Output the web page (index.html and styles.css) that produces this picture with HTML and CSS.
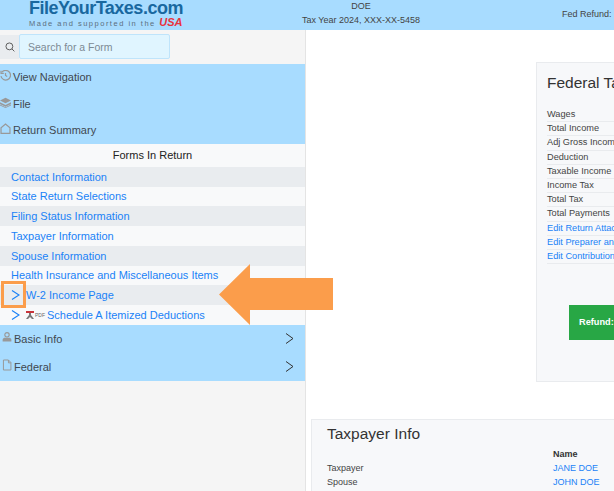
FILE: index.html
```html
<!DOCTYPE html>
<html lang="en">
<head>
    <meta charset="UTF-8">
    <title>FileYourTaxes.com</title>
    <link rel="stylesheet" href="styles.css">
</head>
<body>
    <div class="header">
        <div class="logo">
            <div class="logo-name">FileYourTaxes.com</div>
            <div class="logo-tag">Made and supported in the <span class="usa">USA</span></div>
        </div>
        <div class="client">
            <div>DOE</div>
            <div>Tax Year 2024, XXX-XX-5458</div>
        </div>
        <div class="fed-refund">Fed Refund:</div>
    </div>

    <div class="page">
        <div class="sidebar">
            <div class="search">
                <span class="search-icon">
                    <svg width="10" height="10" viewBox="0 0 16 16" fill="none" stroke="#555" stroke-width="1.5"><circle cx="7" cy="7" r="5.5"/><path d="M11 11l4 4"/></svg>
                </span>
                <input class="search-input" type="text" placeholder="Search for a Form">
            </div>

            <div class="nav">
                <div class="nav-item">
                    <svg class="nav-icon" width="11" height="11" viewBox="0 0 16 16" fill="none" stroke="#999" stroke-width="1.8"><path d="M3 3a7 7 0 1 1-1.6 6"/><path d="M1.5 1v4h4"/><path d="M8 4.5V8l2.5 1.5"/></svg>
                    View Navigation
                </div>
                <div class="nav-item">
                    <svg class="nav-icon" width="11" height="11" viewBox="0 0 16 16" fill="#999"><path d="M8 1l8 4-8 4-8-4z"/><path d="M0 7.5l8 4 8-4v2.5l-8 4-8-4z"/><path d="M0 11l8 4 8-4v1.5l-8 3.5-8-3.5z"/></svg>
                    File
                </div>
                <div class="nav-item">
                    <svg class="nav-icon" width="11" height="11" viewBox="0 0 16 16" fill="none" stroke="#999" stroke-width="1.8"><path d="M1.500 15V7L8 1.500 14.500 7v8z"/></svg>
                    Return Summary
                </div>
            </div>

            <div class="forms-title">Forms In Return</div>
            <div class="form-row"><a>Contact Information</a></div>
            <div class="form-row"><a>State Return Selections</a></div>
            <div class="form-row"><a>Filing Status Information</a></div>
            <div class="form-row"><a>Taxpayer Information</a></div>
            <div class="form-row"><a>Spouse Information</a></div>
            <div class="form-row"><a>Health Insurance and Miscellaneous Items</a></div>
            <div class="form-row">
                <svg class="chevron" width="9" height="10" viewBox="0 0 9 10" fill="none" stroke="#1a82f7" stroke-width="1.2"><path d="M1 .5L8 5 1 9.500"/></svg>
                <a>W-2 Income Page</a>
            </div>
            <div class="form-row">
                <svg class="chevron" width="9" height="10" viewBox="0 0 9 10" fill="none" stroke="#1a82f7" stroke-width="1.2"><path d="M1 .5L8 5 1 9.500"/></svg>
                <svg class="pdf-icon" width="8" height="8" viewBox="0 0 8 8"><path d="M0 0h8v2H0z" fill="#c8343a"/><path d="M3 2h2v2l3 4H6L4 6 2 8H0l3-4z" fill="#777"/></svg>
                <span class="pdf-label">PDF</span>
                <a>Schedule A Itemized Deductions</a>
            </div>

            <div class="nav nav-lower">
                <div class="nav-item">
                    <svg class="nav-icon" width="10" height="10" viewBox="0 0 16 16" fill="#999"><circle cx="8" cy="4.500" r="3.500" fill="none" stroke="#999" stroke-width="1.8"/><path d="M1 15v-2.500C1 10 3 9 5 9h6c2 0 4 1 4 3.500V15z"/></svg>
                    Basic Info
                    <svg class="nav-arrow" width="9" height="11" viewBox="0 0 9 11" fill="none" stroke="#333" stroke-width="1"><path d="M1 .5L8 5.500 1 10.500"/></svg>
                </div>
                <div class="nav-item">
                    <svg class="nav-icon" width="10" height="12" viewBox="0 0 14 16" fill="none" stroke="#999" stroke-width="1.400"><path d="M2 1h7l3.500 3.500V15H2z"/><path d="M9 1v4h3.500"/></svg>
                    Federal
                    <svg class="nav-arrow" width="9" height="11" viewBox="0 0 9 11" fill="none" stroke="#333" stroke-width="1"><path d="M1 .5L8 5.500 1 10.500"/></svg>
                </div>
            </div>
        </div>

        <div class="main">
            <div class="card card-federal">
                <h2>Federal Tax Summary</h2>
                <table class="summary">
                    <tr><td>Wages</td></tr>
                    <tr><td>Total Income</td></tr>
                    <tr><td>Adj Gross Income</td></tr>
                    <tr><td>Deduction</td></tr>
                    <tr><td>Taxable Income</td></tr>
                    <tr><td>Income Tax</td></tr>
                    <tr><td>Total Tax</td></tr>
                    <tr><td>Total Payments</td></tr>
                    <tr><td><a>Edit Return Attachments</a></td></tr>
                    <tr><td><a>Edit Preparer and Firm</a></td></tr>
                    <tr><td><a>Edit Contributions</a></td></tr>
                </table>
                <div class="refund">Refund:</div>
            </div>

            <div class="card card-taxpayer">
                <h2>Taxpayer Info</h2>
                <div class="info-grid">
                    <div></div><div class="info-head">Name</div>
                    <div>Taxpayer</div><a>JANE DOE</a>
                    <div>Spouse</div><a>JOHN DOE</a>
                </div>
            </div>
        </div>
    </div>

    <!-- callout over the sidebar -->
    <div class="callout-box"></div>
    <svg class="callout-arrow" width="115" height="61" viewBox="0 0 115 61"><path d="M0 30.500L31 0v14h83v32H31v15z" fill="#fb9d4b"/></svg>
</body>
</html>
```

FILE: styles.css
```css
:root {
    --sky: #a8dcff;
    --link: #1a82f7;
    --text: #444;
    --card-bg: #f7f8fa;
    --card-line: #e9ebee;
}
html, body {
    height: 100%;
}
body {
    font-family: "Liberation Sans", Arial, sans-serif;
    font-size: 11px;
    margin: 0;
    color: var(--text);
    overflow: hidden;
    background: white;
}
.header {
    height: 30px;
    background: var(--sky);
    display: flex;
    align-items: flex-start;
    overflow: hidden;
}
.logo {
    margin-left: 29px;
    width: 260px;
    flex: none;
}
.logo-name {
    font-size: 18px;
    font-weight: bold;
    line-height: 16px;
    letter-spacing: -0.5px;
    color: #19689f;
}
.logo-tag {
    font-size: 7.500px;
    line-height: 12px;
    letter-spacing: 1.500px;
    color: #5c6f80;
    white-space: nowrap;
}
.usa {
    font-size: 11px;
    font-weight: bold;
    font-style: italic;
    letter-spacing: 0;
    color: #e8323c;
}
.client {
    width: 130px;
    margin-left: 7px;
    flex: none;
    font-size: 9px;
    line-height: 13.500px;
    text-align: center;
    white-space: nowrap;
}
.fed-refund {
    margin-left: auto;
    padding-top: 8px;
    width: 52px;
    flex: none;
    font-size: 9px;
    line-height: 12px;
    white-space: nowrap;
}
.page {
    display: flex;
    height: 461px;
    overflow: hidden;
}
.sidebar {
    width: 305px;
    flex: none;
    background: #f5f5f5;
    border-right: 1px solid #e4e4e4;
}
.search {
    height: 34px;
    display: flex;
    align-items: center;
    padding-bottom: 1px;
    box-sizing: border-box;
}
.search-icon {
    width: 19px;
    height: 24px;
    background: #e9ecef;
    display: flex;
    align-items: center;
    justify-content: center;
    flex: none;
}
.search-input {
    width: 151px;
    height: 25px;
    box-sizing: border-box;
    padding: 0 8px;
    border: 1px solid #bfe4fb;
    border-radius: 2px;
    background: #e0f5ff;
    font-family: inherit;
    font-size: 10.500px;
}
.search-input::placeholder {
    color: #7d8a94;
    opacity: 1;
}
.nav {
    background: var(--sky);
}
.nav-item {
    height: 26.600px;
    display: flex;
    align-items: center;
    gap: 2px;
    color: #3f4850;
    padding-right: 11px;
}
.nav-icon {
    flex: none;
    margin-top: -3px;
}
.nav-lower .nav-item {
    height: 28px;
}
.nav-lower .nav-icon {
    margin-left: 2px;
}
.nav-arrow {
    margin-left: auto;
}
.forms-title {
    height: 23px;
    line-height: 23px;
    text-align: center;
    color: #222;
    background: #f8f9fa;
}
.form-row {
    height: 19.750px;
    display: flex;
    align-items: center;
    padding-left: 11px;
    background: #f8f9fa;
}
.form-row:nth-of-type(even) {
    background: #e9ecef;
}
.form-row a, .summary a, .info-grid a {
    color: var(--link);
}
.chevron {
    flex: none;
    margin-right: 6px;
}
.pdf-icon {
    flex: none;
    margin-right: 1px;
}
.pdf-label {
    font-size: 5px;
    color: #666;
    margin-right: 2px;
}
.main {
    flex: 1;
    min-width: 0;
    padding: 32px 0 0 5px;
}
.card {
    background: var(--card-bg);
    border: 1px solid var(--card-line);
    box-sizing: border-box;
}
.card h2 {
    margin: 0;
    font-size: 15.500px;
    font-weight: normal;
    color: #333;
    white-space: nowrap;
}
.card-federal {
    margin-left: 225px;
    width: 320px;
    height: 320px;
    padding: 11px 0 0 10px;
    position: relative;
}
.summary {
    width: 100%;
    margin-top: 16px;
    border-collapse: collapse;
    font-size: 9.200px;
}
.summary td {
    padding: 0;
    height: 13.200px;
    line-height: 13px;
    border-bottom: 1px solid var(--card-line);
    white-space: nowrap;
}
.refund {
    position: absolute;
    left: 32px;
    top: 242px;
    width: 200px;
    height: 35px;
    line-height: 35px;
    box-sizing: border-box;
    padding-left: 10px;
    background: #28a745;
    color: white;
    font-size: 9.200px;
    font-weight: bold;
}
.card-taxpayer {
    margin-top: 37px;
    height: 120px;
    width: 400px;
    padding: 5px 0 0 15px;
}
.info-grid {
    margin-top: 4px;
    display: grid;
    grid-template-columns: 226px auto;
    grid-auto-rows: 14px;
    align-items: center;
    font-size: 9px;
}
.info-head {
    font-weight: bold;
    color: #333;
}
.callout-box {
    position: absolute;
    left: 1px;
    top: 281px;
    width: 25px;
    height: 27px;
    box-sizing: border-box;
    border: 3px solid #fb9d4b;
}
.callout-arrow {
    position: absolute;
    left: 219px;
    top: 264px;
}
```
